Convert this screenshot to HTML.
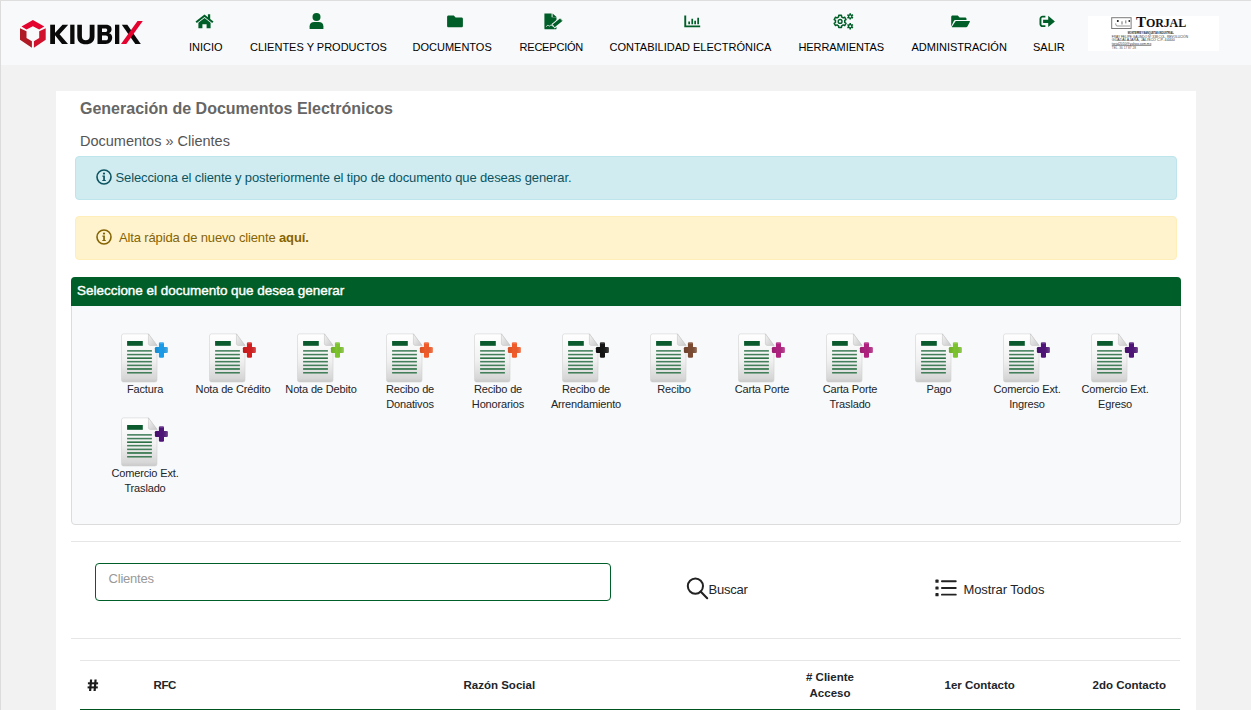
<!DOCTYPE html>
<html><head><meta charset="utf-8">
<style>
*{box-sizing:border-box;margin:0;padding:0}
html,body{width:1251px;height:710px;overflow:hidden}
body{background:#f2f2f2;font-family:"Liberation Sans",sans-serif;position:relative;color:#212529}
.abs{position:absolute}
#lb{left:0;top:0;width:1px;height:710px;background:#dcdcdc;z-index:5}
#tb{left:0;top:0;width:1251px;height:1px;background:#dedede;z-index:5}
#nav{left:0;top:0;width:1251px;height:65px;background:#f8f9fa}
.ni{position:absolute;top:0;height:65px}
.nl{position:absolute;top:42px;font-size:11px;line-height:11px;white-space:nowrap;color:#000}
.nic{position:absolute;fill:#005e28}
#main{left:56px;top:91px;width:1140px;height:640px;background:#fff}
.t{position:absolute;white-space:nowrap}
.alert{position:absolute;left:75px;width:1102px;height:44px;border-radius:4px;border:1px solid}
#info{top:156px;background:#d1ecf1;border-color:#bee5eb;color:#0c5460}
#warn{top:216px;background:#fff3cd;border-color:#ffeeba;color:#856404}
#card{left:71px;top:277px;width:1110px;height:248px;border:1px solid #dcdcdc;border-radius:4px;background:#f8f9fa}
#ch{left:-1px;top:-1px;width:1110px;height:29px;background:#005e28;border-radius:4px 4px 0 0}
.di{position:absolute;width:88px;text-align:center;font-size:11px;line-height:15px;color:#212529;letter-spacing:-0.15px}
.di svg{display:block;margin:0 auto}
.hr{position:absolute;height:1px;background:#e6e6e6}
#inp{left:95px;top:563px;width:516px;height:38px;border:1px solid #005e28;border-radius:4px;background:#fff}
.th{position:absolute;font-weight:bold;font-size:11.5px;color:#212529;white-space:nowrap}
</style></head><body>
<div id="lb" class="abs"></div><div id="tb" class="abs"></div>
<div id="nav" class="abs">
  <!-- logo -->
  <svg class="abs" style="left:19px;top:19px" width="126" height="31" viewBox="19 19 126 31">
    <polygon fill="#e4032e" points="21.5,26.5 32.9,20 44.3,26.5 39.2,29.6 32.9,26.3 26.5,29.6"/>
    <polygon fill="#b01a24" points="20,28.2 20,39.8 31.9,47.7 31.9,41.2 26.5,38.1 26.5,31.3"/>
    <polygon fill="#d0122c" points="45.7,28.2 45.7,39.8 33.9,47.7 33.9,41.2 39.2,38.1 39.2,31.3"/>
    <g fill="#0a0a0a">
      <!-- K -->
      <rect x="50.2" y="24.7" width="4.8" height="19.3"/>
      <polygon points="54,34 62.5,24.7 68.2,24.7 59.6,34.2 68,44 62,44"/>
      <!-- I -->
      <rect x="70.2" y="24.7" width="4.3" height="19.3"/>
      <!-- U -->
      <path d="M77.3,24.7h4.6v11.6c0,2.6 1.4,4 3.9,4s3.9-1.4 3.9-4V24.7h4.8v11.8c0,5.2-3.3,7.8-8.7,7.8s-8.5-2.6-8.5-7.8z"/>
      <!-- B -->
      <path fill-rule="evenodd" d="M97.5,24.7h8.2c3.8,0 5.9,1.6 5.9,4.6c0,1.9-1,3.2-2.6,3.9c2.1,0.6 3.2,2.1 3.2,4.3c0,3.5-2.4,6.5-6.6,6.5h-8.1z M102,28.5v3.5h3.3c1.2,0 1.9-0.6 1.9-1.8s-0.7-1.7-1.9-1.7z M102,35.6v4.6h3.8c1.4,0 2.2-0.8 2.2-2.3s-0.8-2.3-2.2-2.3z"/>
      <!-- I -->
      <rect x="115" y="24.7" width="4.3" height="19.3"/>
      <!-- X black -->
      <polygon points="121.8,24.7 127.3,24.7 140.8,44 135.3,44"/>
    </g>
    <polygon fill="#e4032e" points="121,44 137.5,20.9 142.8,20.9 126.3,44"/>
  </svg>

  <!-- nav items -->
  <div class="nl" style="left:189px">INICIO</div>
  <svg class="nic" style="left:195px;top:13px" width="19" height="16" viewBox="0 0 19 16"><path d="M9.5,1.5 L0.5,8.6 L1.8,10 L9.5,3.9 L17.2,10 L18.5,8.6 L15.2,6 V1.2 H12.9 V4.2 Z M3.4,9.8 V15.3 H7.4 V11.2 H11.6 V15.3 H15.6 V9.8 L9.5,5 Z"/></svg>

  <div class="nl" style="left:250px">CLIENTES Y PRODUCTOS</div>
  <svg class="nic" style="left:308.5px;top:13px" width="15" height="16" viewBox="0 0 15 16"><circle cx="7.5" cy="4" r="4"/><path d="M0.6,16 V13.2 C0.6,10.6 2.6,9 5.2,9 H9.8 C12.4,9 14.4,10.6 14.4,13.2 V16 Z"/></svg>

  <div class="nl" style="left:412.5px">DOCUMENTOS</div>
  <svg class="nic" style="left:446.5px;top:14.5px" width="16" height="13" viewBox="0 0 16 13"><path d="M1.5,0.5 H6.8 L8.6,2.4 H14.5 C15.3,2.4 15.9,3 15.9,3.8 V11 C15.9,11.8 15.3,12.3 14.5,12.3 H1.5 C0.7,12.3 0.1,11.8 0.1,11 V1.9 C0.1,1.1 0.7,0.5 1.5,0.5 Z"/></svg>

  <div class="nl" style="left:519.5px;letter-spacing:-0.2px">RECEPCIÓN</div>
  <svg class="nic" style="left:543.5px;top:12.5px" width="19" height="17" viewBox="0 0 19 17"><path d="M0.4,0.4 H7.6 V4.3 H12.5 V15.4 C12.5,15.9 12.1,16.3 11.6,16.3 H1.3 C0.8,16.3 0.4,15.9 0.4,15.4 Z M8.6,0.4 L12.5,4.0 H8.6 Z"/>
<path d="M9.00,13.35 L18.50,5.60" stroke="#f8f9fa" stroke-width="5.4"/>
<path d="M9.60,12.90 L17.61,6.33" stroke="#005e28" stroke-width="3.4"/>
<path d="M17.08,6.77 L18.50,5.60" stroke="#f8f9fa" stroke-width="4" stroke-dasharray="0.6 10"/>
<path d="M2.2,13.6 C2.9,13 3.4,12.2 4,12.2 C4.6,12.2 4.6,13.1 5.3,13.1 C6,13.1 6.3,12.1 6.9,12.1 C7.4,12.1 7.6,12.9 8.4,12.9 L9.6,12.9" fill="none" stroke="#f8f9fa" stroke-width="0.8"/></svg>

  <div class="nl" style="left:609.5px">CONTABILIDAD ELECTRÓNICA</div>
  <svg class="nic" style="left:684px;top:14.5px" width="17" height="13" viewBox="0 0 17 13"><path d="M0.3,0.6 H2.2 V10.4 H16.2 V12.3 H0.3 Z M4.3,6.6 H6 V9.3 H4.3 Z M7.4,3.7 H9.1 V9.3 H7.4 Z M10.3,5.8 H12 V9.3 H10.3 Z M13.3,2.7 H15 V9.3 H13.3 Z"/></svg>

  <div class="nl" style="left:798.5px;letter-spacing:-0.08px">HERRAMIENTAS</div>
  <svg class="nic" style="left:832.5px;top:12.5px" width="21" height="17" viewBox="0 0 21 17">
    <path fill="none" stroke="#005e28" stroke-width="1.5" stroke-linejoin="round" d="M4.75,4.33 L5.60,3.95 L5.75,2.35 L8.45,2.35 L8.60,3.95 L9.45,4.33 L10.21,4.87 L11.66,4.20 L13.02,6.55 L11.71,7.47 L11.80,8.40 L11.71,9.33 L13.02,10.25 L11.66,12.60 L10.21,11.93 L9.45,12.47 L8.60,12.85 L8.45,14.45 L5.75,14.45 L5.60,12.85 L4.75,12.47 L3.99,11.93 L2.54,12.60 L1.18,10.25 L2.49,9.33 L2.40,8.40 L2.49,7.47 L1.18,6.55 L2.54,4.20 L3.99,4.87 Z"/>
    <circle cx="7.100000000000023" cy="8.399999999999999" r="1.9" fill="none" stroke="#005e28" stroke-width="1.4"/>
    <path fill="#005e28" fill-rule="evenodd" d="M16.05,1.41 L16.40,1.25 L16.41,0.20 L17.99,0.20 L18.00,1.25 L18.35,1.41 L18.66,1.63 L19.58,1.11 L20.37,2.48 L19.47,3.02 L19.50,3.40 L19.47,3.78 L20.37,4.32 L19.58,5.69 L18.66,5.17 L18.35,5.39 L18.00,5.55 L17.99,6.60 L16.41,6.60 L16.40,5.55 L16.05,5.39 L15.74,5.17 L14.82,5.69 L14.03,4.32 L14.93,3.78 L14.90,3.40 L14.93,3.02 L14.03,2.48 L14.82,1.11 L15.74,1.63 Z M16.20,3.40 A1.0,1.0 0 1 0 18.20,3.40 A1.0,1.0 0 1 0 16.20,3.40 Z"/>
    <path fill="#005e28" fill-rule="evenodd" d="M16.05,11.21 L16.40,11.05 L16.41,10.00 L17.99,10.00 L18.00,11.05 L18.35,11.21 L18.66,11.43 L19.58,10.91 L20.37,12.28 L19.47,12.82 L19.50,13.20 L19.47,13.58 L20.37,14.12 L19.58,15.49 L18.66,14.97 L18.35,15.19 L18.00,15.35 L17.99,16.40 L16.41,16.40 L16.40,15.35 L16.05,15.19 L15.74,14.97 L14.82,15.49 L14.03,14.12 L14.93,13.58 L14.90,13.20 L14.93,12.82 L14.03,12.28 L14.82,10.91 L15.74,11.43 Z M16.20,13.20 A1.0,1.0 0 1 0 18.20,13.20 A1.0,1.0 0 1 0 16.20,13.20 Z"/>
  </svg>

  <div class="nl" style="left:911.5px">ADMINISTRACIÓN</div>
  <svg class="nic" style="left:951px;top:14.5px" width="19" height="13" viewBox="0 0 19 13"><path d="M0.2,1.9 C0.2,1.1 0.8,0.5 1.6,0.5 H6.8 L8.6,2.4 H14.1 C14.9,2.4 15.5,3 15.5,3.8 V5 H4.5 C3.7,5 3.1,5.4 2.8,6.1 L0.2,11.6 Z M4.7,6 H18.4 C18.9,6 19.1,6.4 18.9,6.8 L16.4,11.6 C16.1,12 15.6,12.3 15.1,12.3 H1.2 C0.9,12.3 0.8,12 0.9,11.7 Z"/></svg>

  <div class="nl" style="left:1033px">SALIR</div>
  <svg class="nic" style="left:1039px;top:14.5px" width="17" height="13" viewBox="0 0 17 13"><path d="M6.4,0.7 H3.7 C1.8,0.7 0.5,2 0.5,3.9 V8.9 C0.5,10.8 1.8,12.1 3.7,12.1 H6.4 V10.3 H3.7 C2.9,10.3 2.4,9.8 2.4,9 V3.8 C2.4,3 2.9,2.5 3.7,2.5 H6.4 Z M4.1,4.8 H9.2 V0.8 L15.9,6.4 L9.2,12 V8 H4.1 Z"/></svg>

  <!-- torjal -->
  <div class="abs" style="left:1088px;top:16px;width:131px;height:35px;background:#fff"></div>
  <svg class="abs" style="left:1088px;top:16px" width="131" height="35" viewBox="1088 16 131 35">
    <rect x="1111.7" y="17.7" width="19.4" height="10.8" fill="#fff" stroke="#7a7a7a" stroke-width="1"/>
    <circle cx="1117.8" cy="20.9" r="1" fill="#111"/><circle cx="1129.3" cy="21" r="0.9" fill="#222"/>
    <path d="M1115.7,23.4 Q1115.6,26 1117,26 H1130" fill="none" stroke="#999" stroke-width="1"/>
    <rect x="1121.3" y="21.3" width="1.4" height="3.2" fill="#999"/><rect x="1125.3" y="20.4" width="1" height="3" fill="#777"/>
    <text x="1136" y="27" font-family="Liberation Serif" font-weight="bold" font-size="15" fill="#111" letter-spacing="-0.1">T<tspan font-size="12">ORJAL</tspan></text>
    <g font-family="Liberation Sans" fill="#222">
      <text x="1127.8" y="33.8" font-size="3.6" font-weight="bold" textLength="45.8" lengthAdjust="spacingAndGlyphs">MONTERREY  BANQUETAS  INDUSTRIAL</text>
      <text x="1111.8" y="37.6" font-size="3.6" textLength="76.2" lengthAdjust="spacingAndGlyphs" fill="#333">FRAY FELIPE GALINDO Nº 338 COL. REVOLUCIÓN</text>
      <text x="1111.8" y="41.2" font-size="3.6" textLength="63" lengthAdjust="spacingAndGlyphs" fill="#333">GUADALAJARA, JALISCO  C.P. 44400</text>
      <text x="1111.8" y="44.9" font-size="3.6" textLength="39.5" lengthAdjust="spacingAndGlyphs" fill="#333">torjal2010@yahoo.com.mx</text>
      <rect x="1111.8" y="45.3" width="39.5" height="0.5" fill="#333"/>
      <text x="1111.8" y="48.5" font-size="3.6" textLength="24.2" lengthAdjust="spacingAndGlyphs" fill="#555">TEL. 36 17 87 28</text>
    </g>
  </svg>
</div>

<div id="main" class="abs"></div>
<div class="t" style="left:80px;top:100px;font-size:16px;font-weight:bold;color:#666">Generación de Documentos Electrónicos</div>
<div class="t" style="left:80px;top:133px;font-size:14.5px;color:#555">Documentos » Clientes</div>

<div id="info" class="alert"></div>
<div id="warn" class="alert"></div>
<svg class="abs" style="left:96px;top:169px" width="16" height="16" viewBox="0 0 16 16"><circle cx="8" cy="8" r="7" fill="none" stroke="#0c5460" stroke-width="1.6"/><circle cx="8" cy="4.6" r="1.1" fill="#0c5460"/><path d="M6.4,6.6 H8.9 V10.9 H9.8 V12.1 H6.3 V10.9 H7.2 V7.8 H6.4 Z" fill="#0c5460"/></svg>
<div class="t" style="left:115.5px;top:170px;font-size:13px;letter-spacing:-0.12px;color:#0c5460">Selecciona el cliente y posteriormente el tipo de documento que deseas generar.</div>
<svg class="abs" style="left:96px;top:229px" width="16" height="16" viewBox="0 0 16 16"><circle cx="8" cy="8" r="7" fill="none" stroke="#856404" stroke-width="1.6"/><circle cx="8" cy="4.6" r="1.1" fill="#856404"/><path d="M6.4,6.6 H8.9 V10.9 H9.8 V12.1 H6.3 V10.9 H7.2 V7.8 H6.4 Z" fill="#856404"/></svg>
<div class="t" style="left:119px;top:230px;font-size:13px;letter-spacing:-0.14px;color:#856404">Alta rápida de nuevo cliente <b>aquí.</b></div>

<div id="card" class="abs"><div id="ch" class="abs"></div></div>
<div class="t" style="left:77px;top:283px;font-size:13.5px;color:#fff;-webkit-text-stroke:0.4px #fff;letter-spacing:-0.02px">Seleccione el documento que desea generar</div>

<svg width="0" height="0" style="position:absolute">
<defs>
<linearGradient id="pg" x1="0" y1="0" x2="0" y2="1"><stop offset="0" stop-color="#ffffff"/><stop offset="0.55" stop-color="#f1f1f1"/><stop offset="0.93" stop-color="#d6d6d6"/><stop offset="1" stop-color="#c8c8c8"/></linearGradient>
<linearGradient id="fg" x1="0" y1="0" x2="1" y2="1"><stop offset="0" stop-color="#f4f4f4"/><stop offset="1" stop-color="#c9c9c9"/></linearGradient>
<linearGradient id="ph" x1="0" y1="0" x2="1" y2="0"><stop offset="0" stop-color="#000" stop-opacity="0.13"/><stop offset="0.45" stop-color="#000" stop-opacity="0"/><stop offset="1" stop-color="#fff" stop-opacity="0.22"/></linearGradient>
<symbol id="plus" viewBox="0 0 54 56"><rect x="40.9" y="12.2" width="5.1" height="15.6" rx="1.2"/><rect x="36.9" y="17" width="13" height="5.9" rx="1.2"/></symbol>
<symbol id="doc" viewBox="0 0 54 56">
<path d="M3.5,6 Q3.5,3.9 5.6,3.9 H30.4 L39,15.4 V50 Q39,52 37,52 H5.5 Q3.5,52 3.5,50 Z" fill="url(#pg)" stroke="#d2d2d2" stroke-width="0.6"/>
<path d="M30.4,3.9 V13.6 Q30.4,15.4 32.2,15.4 H39 Z" fill="url(#fg)" stroke="#bdbdbd" stroke-width="0.5"/>
<rect x="9.1" y="11" width="15.7" height="4.8" fill="#0b5a2e"/>
<g fill="#427f5a"><rect x="9.1" y="20.1" width="24.8" height="1.55"/><rect x="9.1" y="23.8" width="24.8" height="1.55"/><rect x="9.1" y="27.4" width="24.8" height="1.55" fill="#226b3c"/><rect x="9.1" y="30.9" width="24.8" height="1.55"/><rect x="9.1" y="34.6" width="24.8" height="1.55"/><rect x="9.1" y="38.2" width="24.8" height="1.55" fill="#226b3c"/><rect x="9.1" y="42" width="24.8" height="1.55"/></g>
</symbol>
</defs></svg>
<svg class="abs" style="left:118px;top:330px" width="54" height="56" viewBox="0 0 54 56"><use href="#doc"/><use href="#plus" fill="#1b9ce8"/><rect x="36.9" y="17" width="13" height="5.9" rx="1.2" fill="url(#ph)"/><rect x="41.3" y="12.4" width="4.3" height="1" rx="0.5" fill="#fff" opacity="0.3"/></svg>
<div class="di" style="left:101px;top:382px">Factura</div>
<svg class="abs" style="left:206px;top:330px" width="54" height="56" viewBox="0 0 54 56"><use href="#doc"/><use href="#plus" fill="#d41d1d"/><rect x="36.9" y="17" width="13" height="5.9" rx="1.2" fill="url(#ph)"/><rect x="41.3" y="12.4" width="4.3" height="1" rx="0.5" fill="#fff" opacity="0.3"/></svg>
<div class="di" style="left:189px;top:382px">Nota de Crédito</div>
<svg class="abs" style="left:294px;top:330px" width="54" height="56" viewBox="0 0 54 56"><use href="#doc"/><use href="#plus" fill="#7cc42d"/><rect x="36.9" y="17" width="13" height="5.9" rx="1.2" fill="url(#ph)"/><rect x="41.3" y="12.4" width="4.3" height="1" rx="0.5" fill="#fff" opacity="0.3"/></svg>
<div class="di" style="left:277px;top:382px">Nota de Debito</div>
<svg class="abs" style="left:383px;top:330px" width="54" height="56" viewBox="0 0 54 56"><use href="#doc"/><use href="#plus" fill="#f15a29"/><rect x="36.9" y="17" width="13" height="5.9" rx="1.2" fill="url(#ph)"/><rect x="41.3" y="12.4" width="4.3" height="1" rx="0.5" fill="#fff" opacity="0.3"/></svg>
<div class="di" style="left:366px;top:382px">Recibo de<br>Donativos</div>
<svg class="abs" style="left:471px;top:330px" width="54" height="56" viewBox="0 0 54 56"><use href="#doc"/><use href="#plus" fill="#f15a29"/><rect x="36.9" y="17" width="13" height="5.9" rx="1.2" fill="url(#ph)"/><rect x="41.3" y="12.4" width="4.3" height="1" rx="0.5" fill="#fff" opacity="0.3"/></svg>
<div class="di" style="left:454px;top:382px">Recibo de<br>Honorarios</div>
<svg class="abs" style="left:559px;top:330px" width="54" height="56" viewBox="0 0 54 56"><use href="#doc"/><use href="#plus" fill="#141414"/><rect x="36.9" y="17" width="13" height="5.9" rx="1.2" fill="url(#ph)"/><rect x="41.3" y="12.4" width="4.3" height="1" rx="0.5" fill="#fff" opacity="0.3"/></svg>
<div class="di" style="left:542px;top:382px">Recibo de<br>Arrendamiento</div>
<svg class="abs" style="left:647px;top:330px" width="54" height="56" viewBox="0 0 54 56"><use href="#doc"/><use href="#plus" fill="#7b4a31"/><rect x="36.9" y="17" width="13" height="5.9" rx="1.2" fill="url(#ph)"/><rect x="41.3" y="12.4" width="4.3" height="1" rx="0.5" fill="#fff" opacity="0.3"/></svg>
<div class="di" style="left:630px;top:382px">Recibo</div>
<svg class="abs" style="left:735px;top:330px" width="54" height="56" viewBox="0 0 54 56"><use href="#doc"/><use href="#plus" fill="#b0217f"/><rect x="36.9" y="17" width="13" height="5.9" rx="1.2" fill="url(#ph)"/><rect x="41.3" y="12.4" width="4.3" height="1" rx="0.5" fill="#fff" opacity="0.3"/></svg>
<div class="di" style="left:718px;top:382px">Carta Porte</div>
<svg class="abs" style="left:823px;top:330px" width="54" height="56" viewBox="0 0 54 56"><use href="#doc"/><use href="#plus" fill="#b0217f"/><rect x="36.9" y="17" width="13" height="5.9" rx="1.2" fill="url(#ph)"/><rect x="41.3" y="12.4" width="4.3" height="1" rx="0.5" fill="#fff" opacity="0.3"/></svg>
<div class="di" style="left:806px;top:382px">Carta Porte<br>Traslado</div>
<svg class="abs" style="left:912px;top:330px" width="54" height="56" viewBox="0 0 54 56"><use href="#doc"/><use href="#plus" fill="#7cc42d"/><rect x="36.9" y="17" width="13" height="5.9" rx="1.2" fill="url(#ph)"/><rect x="41.3" y="12.4" width="4.3" height="1" rx="0.5" fill="#fff" opacity="0.3"/></svg>
<div class="di" style="left:895px;top:382px">Pago</div>
<svg class="abs" style="left:1000px;top:330px" width="54" height="56" viewBox="0 0 54 56"><use href="#doc"/><use href="#plus" fill="#4e1478"/><rect x="36.9" y="17" width="13" height="5.9" rx="1.2" fill="url(#ph)"/><rect x="41.3" y="12.4" width="4.3" height="1" rx="0.5" fill="#fff" opacity="0.3"/></svg>
<div class="di" style="left:983px;top:382px">Comercio Ext.<br>Ingreso</div>
<svg class="abs" style="left:1088px;top:330px" width="54" height="56" viewBox="0 0 54 56"><use href="#doc"/><use href="#plus" fill="#4e1478"/><rect x="36.9" y="17" width="13" height="5.9" rx="1.2" fill="url(#ph)"/><rect x="41.3" y="12.4" width="4.3" height="1" rx="0.5" fill="#fff" opacity="0.3"/></svg>
<div class="di" style="left:1071px;top:382px">Comercio Ext.<br>Egreso</div>
<svg class="abs" style="left:118px;top:414px" width="54" height="56" viewBox="0 0 54 56"><use href="#doc"/><use href="#plus" fill="#4e1478"/><rect x="36.9" y="17" width="13" height="5.9" rx="1.2" fill="url(#ph)"/><rect x="41.3" y="12.4" width="4.3" height="1" rx="0.5" fill="#fff" opacity="0.3"/></svg>
<div class="di" style="left:101px;top:466px">Comercio Ext.<br>Traslado</div>
<div class="hr" style="left:71px;top:541px;width:1110px"></div>
<div id="inp" class="abs"></div>
<div class="t" style="left:108.5px;top:571px;font-size:13px;color:#999;letter-spacing:-0.2px">Clientes</div>
<svg class="abs" style="left:684px;top:575px" width="26" height="26" viewBox="0 0 26 26"><circle cx="11.4" cy="11.1" r="7.6" fill="none" stroke="#222" stroke-width="2"/><path d="M16.6,16.6 L23.2,23.2" stroke="#222" stroke-width="2.1" stroke-linecap="round"/></svg>
<div class="t" style="left:708.5px;top:582px;font-size:13px;color:#212529;letter-spacing:-0.25px">Buscar</div>
<svg class="abs" style="left:934px;top:578px" width="24" height="20" viewBox="0 0 24 20"><g fill="#222"><rect x="1.4" y="1.6" width="3.2" height="3.2" rx="0.6"/><rect x="1.4" y="8.4" width="3.2" height="3.2" rx="0.6"/><rect x="1.4" y="15.1" width="3.2" height="3.2" rx="0.6"/><rect x="7" y="2.3" width="15.7" height="1.9" rx="0.9"/><rect x="7" y="9" width="15.7" height="1.9" rx="0.9"/><rect x="7" y="15.7" width="15.7" height="1.9" rx="0.9"/></g></svg>
<div class="t" style="left:963.5px;top:582px;font-size:13px;color:#212529;letter-spacing:-0.1px">Mostrar Todos</div>
<div class="hr" style="left:71px;top:638px;width:1110px"></div>
<div class="hr" style="left:80px;top:660px;width:1100px"></div>
<svg class="abs" style="left:87px;top:679px" width="12" height="13" viewBox="0 0 12 13"><g fill="#1d1d1d"><path d="M3,0.6 H5.2 L4.2,12 H2 Z"/><path d="M7.5,0.6 H9.7 L8.7,12 H6.5 Z"/><rect x="0.9" y="3.3" width="10.2" height="2"/><rect x="0.6" y="7.4" width="10.2" height="2"/></g></svg>
<div class="th" style="left:153.5px;top:679px;letter-spacing:-0.4px">RFC</div>
<div class="th" style="left:463.5px;top:679px">Razón Social</div>
<div class="th" style="left:790px;top:669px;text-align:center;line-height:16px;width:80px;font-size:11.5px"># Cliente<br>Acceso</div>
<div class="th" style="left:944.5px;top:679px">1er Contacto</div>
<div class="th" style="left:1092.5px;top:679px">2do Contacto</div>
<div class="abs" style="left:80px;top:709px;width:1100px;height:1px;background:#00521f"></div>
</body></html>
